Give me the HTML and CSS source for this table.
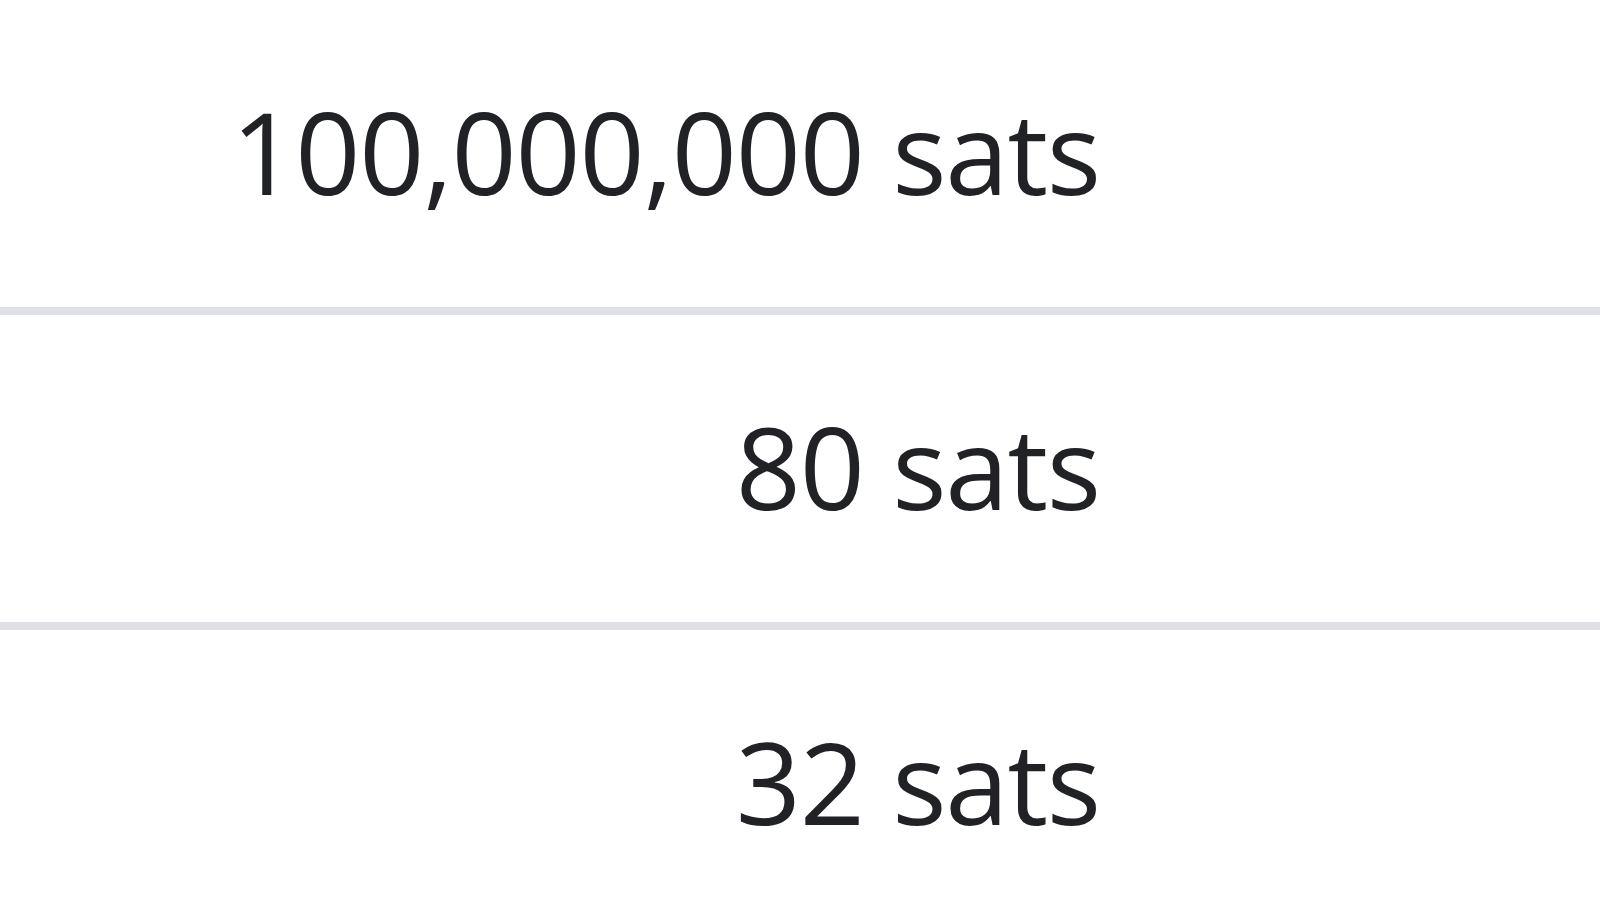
FILE: index.html
```html
<!DOCTYPE html>
<html>
<head>
  <title>Amounts</title>
  <meta charset="UTF-8">
  <link rel="stylesheet" href="styles.css">
</head>
<body>
  <div id="amounts">
    <div class="amount-row"><span class="amount">100,000,000 sats</span></div>
    <div class="amount-row"><span class="amount">80 sats</span></div>
    <div class="amount-row last"><span class="amount">32 sats</span></div>
  </div>
</body>
</html>
```

FILE: styles.css
```css
body {
  margin: 0;
  background-color: #ffffff;
  font-family: "Open Sans", "Noto Sans", sans-serif;
  color: #212226;
  overflow: hidden;
}

#amounts {
  width: 1600px;
}

.amount-row {
  height: 213px;
  padding-top: 94px;
  padding-right: 500px;
  border-bottom: 8px solid #dfe1e6;
  text-align: right;
}

.amount-row.last {
  border-bottom: none;
}

.amount {
  font-size: 114px;
  line-height: 114px;
  letter-spacing: -1.2px;
}
```
